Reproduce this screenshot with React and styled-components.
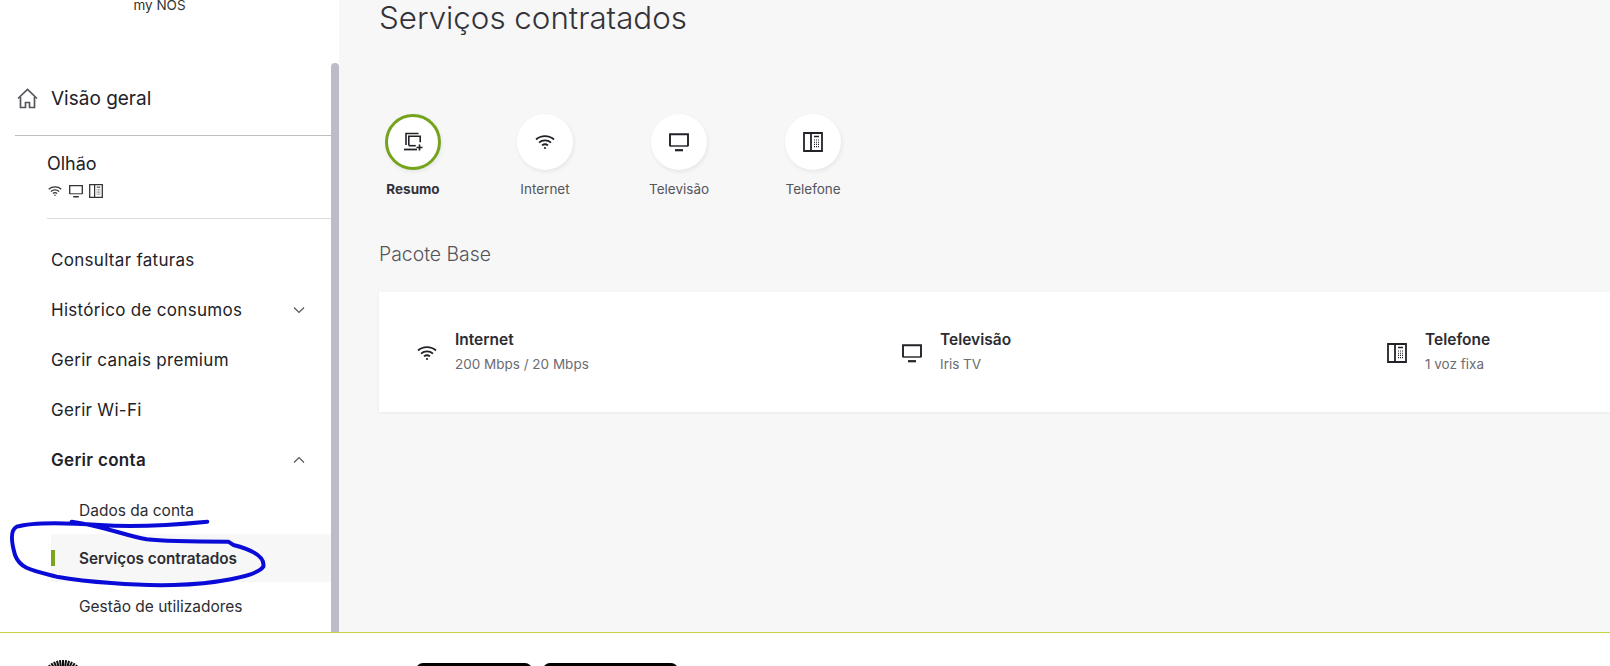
import { createGlobalStyle, styled } from "styled-components";

const GlobalStyle = createGlobalStyle`
  html, body {
    margin: 0;
    height: 100%;
    overflow: hidden;
    background: #f7f7f7;
    font-family: "Inter", "Liberation Sans", sans-serif;
    color: #222228;
  }
`;

const Page = styled.div`
  position: relative;
  height: 666px;
  overflow: hidden;
  display: flex;
  flex-direction: column;
`;

const Columns = styled.div`
  display: flex;
  height: 632px;
  flex: none;
`;

const Sidebar = styled.aside`
  position: relative;
  width: 339px;
  flex: none;
  background: #fff;
  overflow: hidden;
`;

const ScrollThumb = styled.div`
  position: absolute;
  top: 63px;
  right: 0;
  bottom: 0;
  width: 8px;
  background: #bcbcc8;
  border-radius: 4px 4px 0 0;
`;

const Brand = styled.div`
  height: 73px;
  padding-right: 20px;
  text-align: center;
  font-size: 13.5px;
  line-height: 11px;
  color: #333;
`;

const Overview = styled.div`
  display: flex;
  align-items: center;
  gap: 13px;
  height: 50px;
  margin: 0 8px 0 15px;
  padding-left: 2px;
  font-size: 19px;
  color: #222228;
`;

const Rule = styled.hr`
  margin: ${({ $top }) => $top}px 8px 0 ${({ $left }) => $left}px;
  border: 0;
  border-top: 1px solid ${({ $light }) => ($light ? "#dcdcdc" : "#bdbdbd")};
`;

const Location = styled.div`
  padding: 17px 0 0 47px;
  font-size: 18px;
  line-height: 22px;
`;

const MiniIcons = styled.div`
  display: flex;
  gap: 6.5px;
  margin-top: 8px;
  padding-left: 1px;
  height: 16px;
  align-items: center;
  color: #333;
`;

const Menu = styled.nav`
  padding-top: 16px;
`;

const MenuRow = styled.div`
  display: flex;
  align-items: center;
  justify-content: space-between;
  height: 50px;
  padding: 0 34px 0 51px;
  font-size: 17px;
  letter-spacing: 0.3px;
  font-weight: ${({ $open }) => ($open ? 600 : 400)};
`;

const SubMenu = styled.div`
  margin-top: 1px;
`;

const SubRow = styled.div`
  position: relative;
  display: flex;
  align-items: center;
  height: 48px;
  margin: 0 8px 0 51px;
  padding-left: 28px;
  font-size: ${({ $active }) => ($active ? "15.3px" : "15.5px")};
  font-weight: ${({ $active }) => ($active ? 600 : 400)};
  color: #2c2c32;
  background: ${({ $active }) => ($active ? "#f7f7f7" : "transparent")};
`;

const ActiveMark = styled.span`
  position: absolute;
  left: 0;
  top: 16px;
  width: 4px;
  height: 16px;
  background: #7aa51c;
`;

const Content = styled.main`
  flex: 1;
  min-width: 0;
  padding-left: 40px;
`;

const Title = styled.h1`
  margin: 0;
  height: 98px;
  padding-top: 1px;
  box-sizing: border-box;
  font-size: 31.3px;
  font-weight: 300;
  line-height: 34px;
  color: #33333a;
`;

const Tabs = styled.div`
  display: flex;
  gap: 76px;
  padding: 16px 0 0 6px;
`;

const Tab = styled.div`
  min-width: 56px;
  display: flex;
  flex-direction: column;
  align-items: center;
`;

const Circle = styled.div`
  width: 56px;
  height: 56px;
  box-sizing: border-box;
  flex: none;
  border-radius: 50%;
  background: #fff;
  display: flex;
  align-items: center;
  justify-content: center;
  border: ${({ $active }) => ($active ? "3px solid #74a31c" : "0")};
  box-shadow: 1px 2px 4px rgba(0, 0, 0, 0.07);
  color: #222228;
`;

const TabLabel = styled.div`
  margin-top: 10px;
  white-space: nowrap;
  font-size: 13.5px;
  line-height: 18px;
  font-weight: ${({ $active }) => ($active ? 700 : 400)};
  color: ${({ $active }) => ($active ? "#33333a" : "#55555c")};
`;

const SectionTitle = styled.h2`
  margin: 44px 0 0;
  font-size: 19.4px;
  line-height: 24px;
  font-weight: 300;
  color: #55555c;
`;

const Card = styled.section`
  display: grid;
  grid-template-columns: repeat(3, 485px);
  align-items: center;
  height: 120px;
  box-sizing: border-box;
  margin-top: 26px;
  padding: 0 0 2px 38px;
  background: #fff;
  box-shadow: 0 1px 3px rgba(0, 0, 0, 0.06);
`;

const Service = styled.div`
  display: flex;
  align-items: center;
  gap: 18px;
  color: #222228;

  svg {
    margin-top: 4px;
  }
`;

const ServiceName = styled.div`
  font-size: 15.5px;
  font-weight: 600;
  line-height: 22px;
  color: #2c2c32;
`;

const ServiceDetail = styled.div`
  margin-top: 4px;
  font-size: 13.5px;
  line-height: 18px;
  color: #6b6b72;
`;

const Footer = styled.footer`
  flex: 1;
  display: flex;
  background: #fff;
  border-top: 1px solid #c5d341;
  padding: 25px 0 0 42px;
`;

const StoreBadge = styled.div`
  width: ${({ $w }) => $w}px;
  height: 40px;
  margin: 5px 0 0 ${({ $gap }) => $gap}px;
  background: #000;
  border-radius: 7px;
  flex: none;
`;

const Scribble = styled.svg`
  position: absolute;
  left: 0;
  top: 480px;
  width: 345px;
  height: 120px;
  pointer-events: none;
`;

function Wifi({ size = 20 }) {
  return (
    <svg width={size} height={size} viewBox="0 0 20 20" fill="none" stroke="currentColor" strokeWidth="1.8">
      <path d="M1 7.5c5-4.4 13-4.4 18 0" />
      <path d="M4 10.6c3.4-3 8.6-3 12 0" />
      <path d="M7 13.4c1.8-1.4 4.2-1.4 6 0" />
      <circle cx="10" cy="16" r="1.1" fill="currentColor" stroke="none" />
    </svg>
  );
}

function Monitor({ size = 20 }) {
  return (
    <svg width={size} height={size} viewBox="0 0 20 20" fill="none" stroke="currentColor" strokeWidth="1.9">
      <path d="M1 14.2V2.2h18v12" />
      <path d="M1 14h18" strokeWidth="1.4" />
      <path d="M6 18.2h8" strokeWidth="2.2" />
    </svg>
  );
}

function Phone({ size = 20 }) {
  return (
    <svg width={size} height={size} viewBox="0 0 20 20" fill="none" stroke="currentColor" strokeWidth="1.8">
      <path d="M1 1h18v18H1z" />
      <path d="M8 1v18" />
      <path d="M11 4.5h5" strokeWidth="1.5" />
      <path d="M11 8h5M11 10.2h5M11 12.4h5M11 14.6h5" strokeWidth="1.1" strokeDasharray="1 1" />
    </svg>
  );
}

function Bundle() {
  return (
    <svg width="20" height="20" viewBox="0 0 20 20" fill="none" stroke="currentColor" strokeWidth="1.6">
      <path d="M3 13V1.5h12.5" />
      <path d="M5.8 13.5V4.3h11.4v6" />
      <path d="M1 17.5h13" strokeWidth="1.8" />
      <path d="M5.8 13.7h7" />
      <path d="M16.5 12.5v6M13.5 15.5h6" strokeWidth="1.7" />
    </svg>
  );
}

function Home() {
  return (
    <svg width="21" height="21" viewBox="0 0 21 21" fill="none" stroke="#55555c" strokeWidth="1.7">
      <path d="M1 10.5 10.5 1.5l9.5 9" />
      <path d="M3.5 9v10.5h5v-5h4v5h5V9" />
    </svg>
  );
}

function Chevron({ up }) {
  return (
    <svg width="12" height="12" viewBox="0 0 12 12" fill="none" stroke="#55555c" strokeWidth="1.2">
      <path d={up ? "M1 8.5 6 3.5l5 5" : "M1 3.5 6 8.5l5-5"} />
    </svg>
  );
}

function SunLogo() {
  const rays = [];
  for (let i = -9; i <= 9; i++) {
    const a = (i * 8 * Math.PI) / 180;
    rays.push(
      <line
        key={i}
        x1={21 + Math.sin(a) * 11}
        y1={24 - Math.cos(a) * 11}
        x2={21 + Math.sin(a) * 22}
        y2={24 - Math.cos(a) * 22}
        stroke="#111"
        strokeWidth="2"
      />
    );
  }
  return (
    <svg width="42" height="24" viewBox="0 0 42 24">
      {rays}
    </svg>
  );
}

const topMenu = [
  { label: "Consultar faturas" },
  { label: "Histórico de consumos", chevron: "down" },
  { label: "Gerir canais premium" },
  { label: "Gerir Wi-Fi" },
  { label: "Gerir conta", chevron: "up", open: true },
];

const tabs = [
  { label: "Resumo", Icon: Bundle, active: true },
  { label: "Internet", Icon: Wifi },
  { label: "Televisão", Icon: Monitor },
  { label: "Telefone", Icon: Phone },
];

const services = [
  { name: "Internet", detail: "200 Mbps / 20 Mbps", Icon: Wifi },
  { name: "Televisão", detail: "Iris TV", Icon: Monitor },
  { name: "Telefone", detail: "1 voz fixa", Icon: Phone },
];

export default function App() {
  return (
    <Page>
      <GlobalStyle />
      <Columns>
        <Sidebar>
          <Brand>my NOS</Brand>
          <Overview>
            <Home />
            Visão geral
          </Overview>
          <Rule $top={12} $left={15} />
          <Location>
            Olhão
            <MiniIcons>
              <Wifi size={14} />
              <Monitor size={14} />
              <Phone size={14} />
            </MiniIcons>
          </Location>
          <Rule $top={19} $left={47} $light />
          <Menu>
            {topMenu.map((item) => (
              <MenuRow key={item.label} $open={item.open}>
                {item.label}
                {item.chevron && <Chevron up={item.chevron === "up"} />}
              </MenuRow>
            ))}
            <SubMenu>
              <SubRow>Dados da conta</SubRow>
              <SubRow $active>
                <ActiveMark />
                Serviços contratados
              </SubRow>
              <SubRow>Gestão de utilizadores</SubRow>
            </SubMenu>
          </Menu>
          <ScrollThumb />
        </Sidebar>
        <Content>
          <Title>Serviços contratados</Title>
          <Tabs>
            {tabs.map(({ label, Icon, active }) => (
              <Tab key={label}>
                <Circle $active={active}>
                  <Icon />
                </Circle>
                <TabLabel $active={active}>{label}</TabLabel>
              </Tab>
            ))}
          </Tabs>
          <SectionTitle>Pacote Base</SectionTitle>
          <Card>
            {services.map(({ name, detail, Icon }) => (
              <Service key={name}>
                <Icon />
                <div>
                  <ServiceName>{name}</ServiceName>
                  <ServiceDetail>{detail}</ServiceDetail>
                </div>
              </Service>
            ))}
          </Card>
        </Content>
      </Columns>
      <Footer>
        <SunLogo />
        <StoreBadge $w={116} $gap={332} />
        <StoreBadge $w={135} $gap={11} />
      </Footer>
      <Scribble viewBox="0 0 1035 360">
        <path
          d="M622 125C520 135 400 142 300 135C200 128 100 125 50 140C30 150 35 190 45 225C60 265 90 270 170 290C260 305 400 318 520 315C640 312 770 290 790 260C795 230 760 210 700 195L685 185C600 185 500 185 440 178C370 165 300 135 215 125"
          fill="none"
          stroke="#0b0bd8"
          strokeWidth="12"
          strokeLinecap="round"
        />
      </Scribble>
    </Page>
  );
}
